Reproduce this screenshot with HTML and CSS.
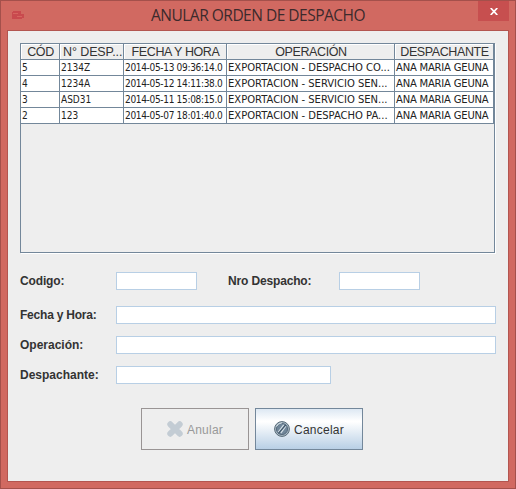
FILE: index.html
```html
<!DOCTYPE html>
<html lang="es">
<head>
<meta charset="utf-8">
<title>ANULAR ORDEN DE DESPACHO</title>
<link rel="stylesheet" href="styles.css">
</head>
<body>
<div class="window">
  <header class="titlebar">
    <svg class="app-icon" width="12" height="10" viewBox="0 0 12 10"><path fill="#c94a4e" d="M1 1h8v3h3v4h-2v1H0V2h1z"/><path fill="#d7645f" d="M1 3h5v1H1zM5 6h5v1H5z"/></svg>
    <h1 class="title"><span>ANULAR ORDEN DE DESPACHO</span></h1>
    <button class="close" aria-label="Cerrar"><svg width="8" height="7" viewBox="0 0 8 7"><path d="M.7 0l6.6 7M7.3 0L.7 7" stroke="#fff" stroke-width="1.7"/></svg></button>
  </header>
  <main class="content">
    <div class="scroll">
      <table>
        <colgroup><col class="c1"><col class="c2"><col class="c3"><col class="c4"><col class="c5"></colgroup>
        <thead><tr><th>CÓD</th><th class="left">N° DESP...</th><th>FECHA Y HORA</th><th>OPERACIÓN</th><th>DESPACHANTE</th></tr></thead>
        <tbody>
          <tr><td>5</td><td>2134Z</td><td class="date">2014-05-13 09:36:14.0</td><td class="op">EXPORTACION - DESPACHO CO...</td><td class="name">ANA MARIA GEUNA</td></tr>
          <tr><td>4</td><td>1234A</td><td class="date">2014-05-12 14:11:38.0</td><td class="op">EXPORTACION - SERVICIO SEN...</td><td class="name">ANA MARIA GEUNA</td></tr>
          <tr><td>3</td><td>ASD31</td><td class="date">2014-05-11 15:08:15.0</td><td class="op">EXPORTACION - SERVICIO SEN...</td><td class="name">ANA MARIA GEUNA</td></tr>
          <tr><td>2</td><td>123</td><td class="date">2014-05-07 18:01:40.0</td><td class="op">EXPORTACION - DESPACHO PA...</td><td class="name">ANA MARIA GEUNA</td></tr>
        </tbody>
      </table>
    </div>
    <form class="form">
      <div class="row first"><label for="codigo">Codigo:</label><input id="codigo" class="short"><label class="second" for="nro">Nro Despacho:</label><input id="nro" class="short"></div>
      <div class="row"><label class="tight" for="fecha">Fecha y Hora:</label><input id="fecha" class="long"></div>
      <div class="row"><label class="wide" for="oper">Operación:</label><input id="oper" class="long"></div>
      <div class="row"><label class="wide" for="desp">Despachante:</label><input id="desp" class="medium"></div>
      <div class="actions">
        <button type="button" class="btn" disabled><svg width="16" height="16" viewBox="0 0 16 16"><path d="M3.3 3.3l9.4 9.4M12.7 3.3l-9.4 9.4" stroke="#c3ccd4" stroke-width="6" stroke-linecap="round"/></svg><span>Anular</span></button>
        <button type="button" class="btn primary"><svg width="16" height="16" viewBox="0 0 16 16"><circle cx="8" cy="8" r="7.4" fill="#a9bbc6" stroke="#566875"/><circle cx="8" cy="8" r="5.6" fill="#71879a" stroke="#4c6072" stroke-width=".8"/><path d="M4.2 11.4l5.5-7.6M6.8 12l5-6.8" stroke="#d3dee5" stroke-width="1.3"/><path d="M4.4 12.4l7.4-8.6" stroke="#3f5568" stroke-width="1.2"/><path d="M2.5 5.5Q4 2.2 8 1.8" stroke="#d9e4ea" fill="none"/></svg><span>Cancelar</span></button>
      </div>
    </form>
  </main>
</div>
</body>
</html>
```
FILE: styles.css
```css
* { box-sizing: border-box; }
body { margin: 0; }
.window {
  width: 516px; height: 489px;
  padding: 0 6px 6px;
  border: 1px solid #a4504b;
  background: #d16961;
  display: flex; flex-direction: column;
  overflow: hidden;
  color: #333;
  font: 12px/16px "Liberation Sans", Arial, sans-serif;
}
.titlebar { display: flex; height: 29px; flex: none; }
.app-icon { margin: 9px 0 0 5px; flex: none; }
.title {
  flex: 1; margin: 0; padding-left: 127px;
  font: 15.5px/29px "Open Sans", "Segoe UI", sans-serif;
  letter-spacing: -0.5px; white-space: nowrap; color: #3c2a2c;
}
.close {
  width: 31px; height: 20px; padding: 0; border: 0;
  background: #c74f4f; display: flex; align-items: center; justify-content: center;
}
.content {
  flex: 1; border: 1px solid #b35550; background: #eee;
  padding: 12px 12px 0;
}
.scroll {
  width: 475px; height: 210px;
  border: 1px solid #73879a;
  box-shadow: 1px 1px 0 #fff;
}
table { border-collapse: separate; border-spacing: 0; table-layout: fixed; width: 473px; }
.c1 { width: 39px; } .c2 { width: 64px; } .c3 { width: 103px; } .c4 { width: 168px; } .c5 { width: 99px; }
th, td {
  height: 16px; padding: 0 0 0 1px; overflow: hidden; white-space: nowrap;
  border-right: 1px solid #73879a; border-bottom: 1px solid #73879a;
}
th {
  font-weight: 400; font-size: 12.5px; line-height: 13px; text-align: center;
  padding-top: 2px;
  background: #eee; box-shadow: inset 1px 1px 0 #fff; letter-spacing: -0.4px;
}
th.left { text-align: left; padding-left: 3px; letter-spacing: -0.1px; }
td {
  background: #fff; color: #222;
  font: 10px/15px "DejaVu Sans Condensed", "DejaVu Sans", Tahoma, sans-serif;
  font-stretch: condensed;
}
.date { letter-spacing: -0.32px; }
.op, .name { font-family: "DejaVu Sans", Tahoma, sans-serif; font-stretch: normal; }
.op { letter-spacing: -0.02px; }
.name { letter-spacing: -0.2px; }
.form { margin: 0; }
.row { display: flex; align-items: center; height: 18px; margin-top: 12px; }
.row.first { margin: 19px 0 16px; }
.row label { width: 96px; font-weight: 700; line-height: 18px; white-space: nowrap; letter-spacing: -0.15px; }
.row .tight { letter-spacing: -0.22px; }
.row .wide { letter-spacing: 0; }
.row .second { width: 111px; margin-left: 31px; }
input {
  height: 18px; padding: 0 2px; margin: 0; border: 1px solid #b8cfe5; border-radius: 0;
  background: #fff; outline: 0;
}
.short { width: 81px; } .long { width: 380px; } .medium { width: 215px; }
.actions { display: flex; gap: 6px; margin: 24px 0 0 121px; }
.btn {
  width: 108px; height: 42px; padding: 0; border: 1px solid #999494; background: #eee;
  display: flex; align-items: center; justify-content: center; gap: 4px;
  font: 12px "Liberation Sans", Arial, sans-serif; letter-spacing: .25px; color: #999;
}
.btn span { padding-top: 1px; }
.primary {
  border-color: #73879a; color: #333;
  background: linear-gradient(#dde8f3, #fff 30%, #fff 32%, #b8cfe5);
}
```
